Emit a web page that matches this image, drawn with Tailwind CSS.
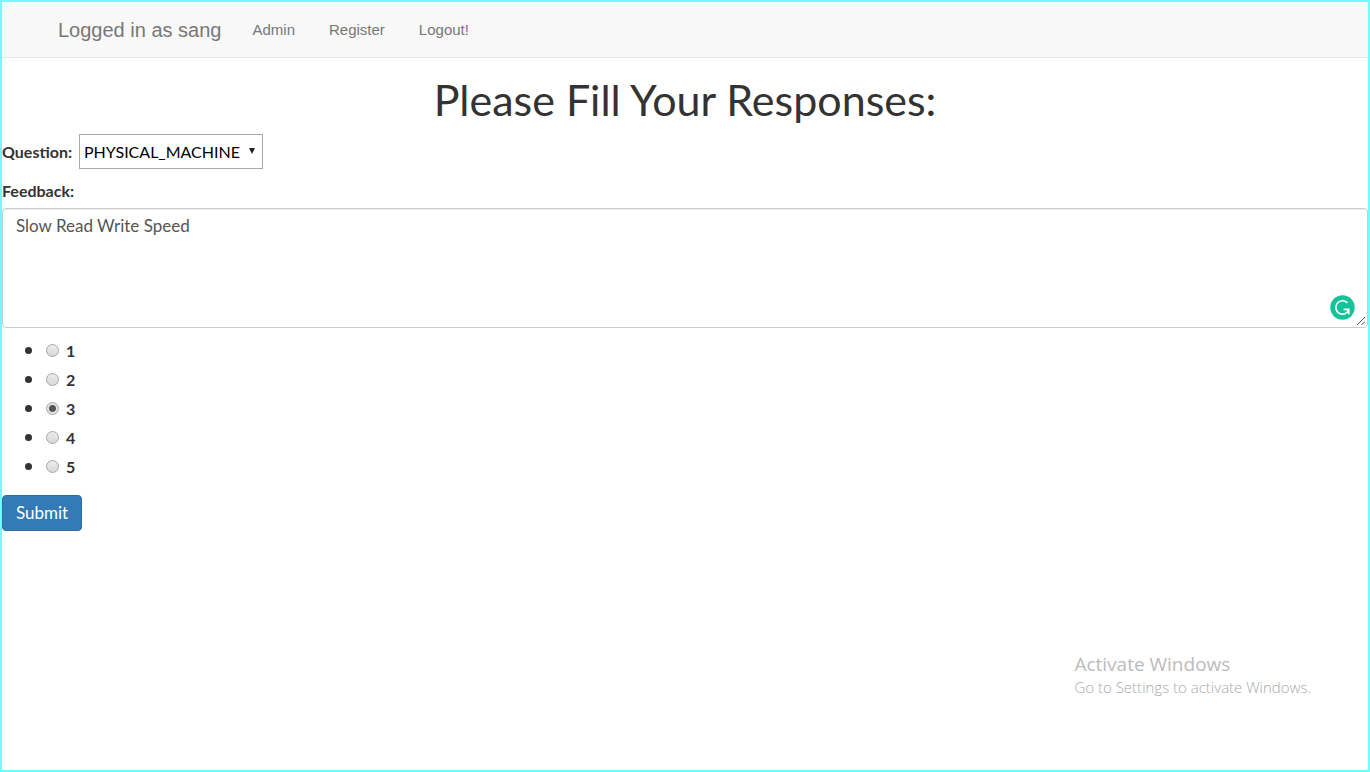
<!DOCTYPE html>
<html lang="en">
<head>
<meta charset="utf-8">
<meta name="viewport" content="width=device-width, initial-scale=1">
<title>Feedback</title>
<script src="https://cdn.jsdelivr.net/npm/@tailwindcss/browser@4"></script>
</head>
<body class="relative flex min-h-screen flex-col border-2 border-[#70fbff] bg-white font-['Lato',sans-serif] text-base text-[#333]">
<nav class="flex h-14 items-center border-b border-[#e7e7e7] bg-[#f8f8f8] pl-14 font-['Liberation_Sans',sans-serif] text-[15px] leading-6 text-[#777]">
  <a href="#" class="mr-[31px] text-xl">Logged in as sang</a>
  <div class="flex gap-[34px]">
    <a href="#">Admin</a>
    <a href="#">Register</a>
    <a href="#">Logout!</a>
  </div>
</nav>
<main>
  <form>
    <h1 class="pt-2 text-center text-[43px] leading-[68px]">Please Fill Your Responses:</h1>
    <div class="flex items-center gap-[7px]">
      <label for="question" class="w-[70px] text-base font-bold whitespace-nowrap">Question:</label>
      <div class="relative">
        <select id="question" class="block h-[35px] w-[184px] appearance-none border border-[#a9a9a9] bg-white pl-1 text-base text-black">
          <option>PHYSICAL_MACHINE</option>
        </select>
        <svg class="pointer-events-none absolute top-[14px] right-2 h-[6px] w-[6px]" viewBox="0 0 6 6" aria-hidden="true"><path d="M0 0h6L3 6z" fill="#222"/></svg>
      </div>
    </div>
    <label for="feedback" class="mt-2 mb-1 block text-base leading-[27px] font-bold">Feedback:</label>
    <div class="relative">
      <textarea id="feedback" class="block h-[120px] w-full resize-none rounded border border-[#ccc] px-[13px] py-[5px] text-[17px] leading-6 text-[#555] shadow-[inset_0_1px_1px_rgba(0,0,0,0.075)]">Slow Read Write Speed</textarea>
      <svg class="absolute right-[13px] bottom-2 h-[25px] w-[25px]" viewBox="0 0 25 25" fill="none" aria-hidden="true">
        <circle cx="12.5" cy="12.5" r="12.2" fill="#15c39a"/>
        <path d="M17.4 7.900A6.700 6.700 0 1 0 16.800 17.600L18.600 15.200" stroke="#fff" stroke-width="1.6"/>
        <path d="M13.600 14.400h5.200v4.800" stroke="#fff" stroke-width="1.6"/>
      </svg>
      <svg class="absolute right-[3px] bottom-[3px] h-2 w-2" viewBox="0 0 8 8" aria-hidden="true"><path d="M0 8L8 0M4.500 8L8 4.500" stroke="#555" stroke-width="1"/></svg>
    </div>
    <ul class="mt-2 mb-[14px] text-base leading-[29px] font-bold">
      <li class="flex items-center pl-[23px]"><span class="mr-[14px] size-[7px] rounded-full bg-[#333]"></span><label class="flex items-center gap-[7px]"><input type="radio" name="rating" class="size-[13px] appearance-none rounded-full border border-[#a8a8a8] bg-linear-to-b from-[#ececec] to-[#d8d8d8]">1</label></li>
      <li class="flex items-center pl-[23px]"><span class="mr-[14px] size-[7px] rounded-full bg-[#333]"></span><label class="flex items-center gap-[7px]"><input type="radio" name="rating" class="size-[13px] appearance-none rounded-full border border-[#a8a8a8] bg-linear-to-b from-[#ececec] to-[#d8d8d8]">2</label></li>
      <li class="flex items-center pl-[23px]"><span class="mr-[14px] size-[7px] rounded-full bg-[#333]"></span><label class="flex items-center gap-[7px]"><input type="radio" name="rating" checked class="size-[13px] appearance-none rounded-full border border-[#a8a8a8] bg-[radial-gradient(circle,#555_0_3px,#e2e2e2_4px)]">3</label></li>
      <li class="flex items-center pl-[23px]"><span class="mr-[14px] size-[7px] rounded-full bg-[#333]"></span><label class="flex items-center gap-[7px]"><input type="radio" name="rating" class="size-[13px] appearance-none rounded-full border border-[#a8a8a8] bg-linear-to-b from-[#ececec] to-[#d8d8d8]">4</label></li>
      <li class="flex items-center pl-[23px]"><span class="mr-[14px] size-[7px] rounded-full bg-[#333]"></span><label class="flex items-center gap-[7px]"><input type="radio" name="rating" class="size-[13px] appearance-none rounded-full border border-[#a8a8a8] bg-linear-to-b from-[#ececec] to-[#d8d8d8]">5</label></li>
    </ul>
    <button type="submit" class="block h-9 w-20 rounded border border-[#2e6da4] bg-[#337ab7] text-[17px] text-white">Submit</button>
  </form>
</main>
<aside class="absolute right-[57px] bottom-[72px] font-['Segoe_UI','Open_Sans',sans-serif] font-light text-[#aaa]">
  <p class="text-[19px] leading-6 font-normal text-[#bbb]">Activate Windows</p>
  <p class="text-[15px] leading-[22px]">Go to Settings to activate Windows.</p>
</aside>
</body>
</html>
